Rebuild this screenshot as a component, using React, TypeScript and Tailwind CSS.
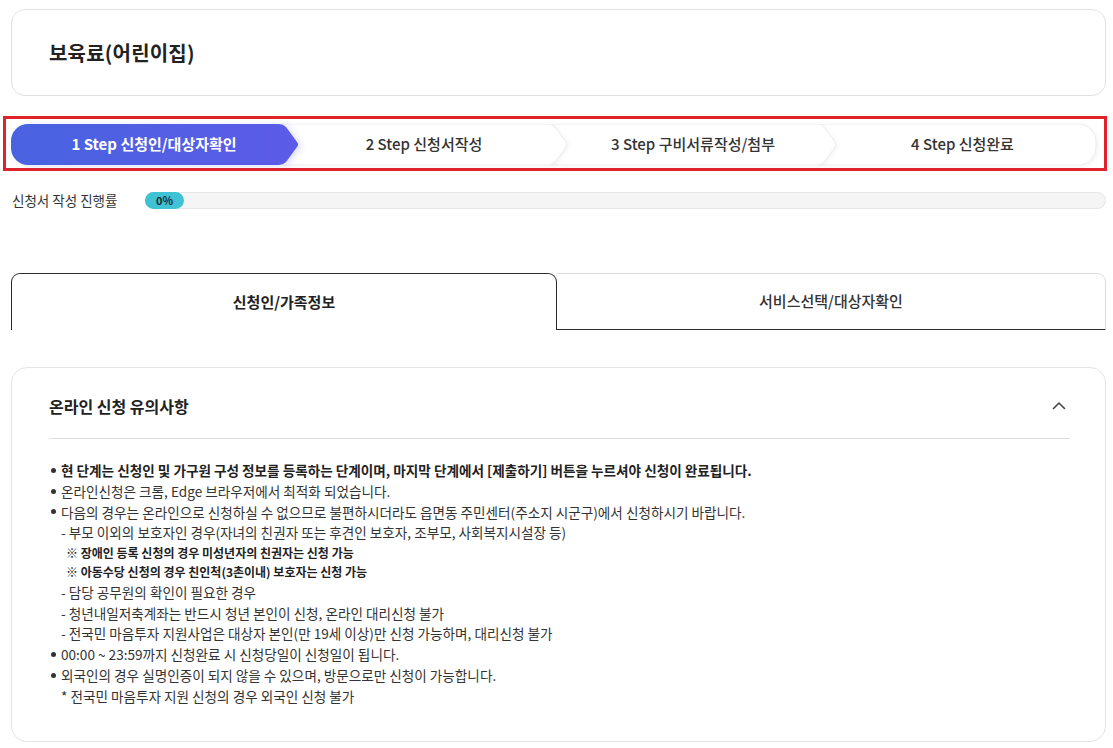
import React from 'react';

const steps = [
  { no: 1, label: '신청인/대상자확인' },
  { no: 2, label: '신청서작성' },
  { no: 3, label: '구비서류작성/첨부' },
  { no: 4, label: '신청완료' },
];

const StepShape = ({ index, width }: { index: number; width: number }) => {
  const h = 41;
  const w = width;
  if (index === 0) {
    return (
      <svg width={w} height={h} className="absolute inset-0 drop-shadow-[3px_1px_3px_rgba(60,70,200,0.18)]">
        <defs>
          <linearGradient id="stepActive" x1="0" x2="1" y1="0" y2="0">
            <stop offset="0%" stopColor="#4863e0" />
            <stop offset="100%" stopColor="#5c5be8" />
          </linearGradient>
        </defs>
        <path
          d={`M17,0 H${w - 20} Q${w - 16},0 ${w - 13},3 L${w - 2},18 Q${w},20.5 ${w - 2},23 L${w - 13},38 Q${w - 16},${h} ${w - 20},${h} H17 A17,17 0 0 1 0,24 V17 A17,17 0 0 1 17,0 Z`}
          fill="url(#stepActive)"
        />
      </svg>
    );
  }
  const last = index === 3;
  const d = last
    ? `M2,0 H${w - 18} A18,18 0 0 1 ${w - 1},18 V23 A18,18 0 0 1 ${w - 18},${h} H2 L14,20.5 Z`
    : `M2,0 H${w - 20} Q${w - 16},0 ${w - 13},3 L${w - 2},18 Q${w},20.5 ${w - 2},23 L${w - 13},38 Q${w - 16},${h} ${w - 20},${h} H2 L14,20.5 Z`;
  return (
    <svg width={w} height={h} className="absolute inset-0 drop-shadow-[1px_1px_2px_rgba(0,0,0,0.06)]">
      <path d={d} fill="#ffffff" stroke="#ececec" strokeWidth="1" />
    </svg>
  );
};

const noticeItems: { kind: 'bullet' | 'dash' | 'note' | 'star'; text: string; bold?: boolean }[] = [
  { kind: 'bullet', bold: true, text: '현 단계는 신청인 및 가구원 구성 정보를 등록하는 단계이며, 마지막 단계에서 [제출하기] 버튼을 누르셔야 신청이 완료됩니다.' },
  { kind: 'bullet', text: '온라인신청은 크롬, Edge 브라우저에서 최적화 되었습니다.' },
  { kind: 'bullet', text: '다음의 경우는 온라인으로 신청하실 수 없으므로 불편하시더라도 읍면동 주민센터(주소지 시군구)에서 신청하시기 바랍니다.' },
  { kind: 'dash', text: '- 부모 이외의 보호자인 경우(자녀의 친권자 또는 후견인 보호자, 조부모, 사회복지시설장 등)' },
  { kind: 'note', text: '※ 장애인 등록 신청의 경우 미성년자의 친권자는 신청 가능' },
  { kind: 'note', text: '※ 아동수당 신청의 경우 친인척(3촌이내) 보호자는 신청 가능' },
  { kind: 'dash', text: '- 담당 공무원의 확인이 필요한 경우' },
  { kind: 'dash', text: '- 청년내일저축계좌는 반드시 청년 본인이 신청, 온라인 대리신청 불가' },
  { kind: 'dash', text: '- 전국민 마음투자 지원사업은 대상자 본인(만 19세 이상)만 신청 가능하며, 대리신청 불가' },
  { kind: 'bullet', text: '00:00 ~ 23:59까지 신청완료 시 신청당일이 신청일이 됩니다.' },
  { kind: 'bullet', text: '외국인의 경우 실명인증이 되지 않을 수 있으며, 방문으로만 신청이 가능합니다.' },
  { kind: 'star', text: '* 전국민 마음투자 지원 신청의 경우 외국인 신청 불가' },
];

export default function App() {
  return (
    <div className="min-h-screen bg-white font-['Noto_Sans_CJK_KR','Noto_Sans',sans-serif] text-[#333]">
      <div className="pl-[11px] pr-[7px] pt-[9px] pb-[6px]">
        {/* Title */}
        <div className="flex h-[87px] items-center rounded-[14px] border border-[#e2e2e2] pl-[37px]">
          <h1 className="text-[20px] font-bold tracking-[0.2px] text-[#222]">보육료(어린이집)</h1>
        </div>

        {/* Steps */}
        <div className="-ml-[8px] -mr-[1px] mt-[20px] border-[3px] border-[#e0222c] pl-[5px] pt-[5px] pb-[3px]">
          <div className="flex">
            {steps.map((s, i) => {
              const width = i === 3 ? 279 : 288;
              return (
                <div
                  key={s.no}
                  className={`relative flex h-[41px] shrink-0 items-center justify-center ${
                    i === 0 ? 'z-40 w-[288px] pr-[2px]' : i === 1 ? 'z-30 -ml-[19px] w-[288px]' : i === 2 ? 'z-20 -ml-[19px] w-[288px]' : 'z-10 -ml-[19px] w-[279px] pl-[10px]'
                  }`}
                >
                  <StepShape index={i} width={width} />
                  <span className={`relative text-[15px] ${i === 0 ? 'font-bold text-white' : 'font-medium text-[#333]'}`}>
                    {s.no} Step {s.label}
                  </span>
                </div>
              );
            })}
          </div>
        </div>

        {/* Progress */}
        <div className="mt-[21px] flex h-[17px] items-center">
          <span className="w-[134px] pl-[1px] text-[13.5px] leading-[17px] text-[#333]">신청서 작성 진행률</span>
          <div className="relative h-[17px] flex-1 rounded-full border border-[#e6e6e6] bg-[#f5f5f5]">
            <div className="absolute -left-px -top-px flex h-[17px] w-[39px] items-center justify-center rounded-full bg-[#3ec2d4]">
              <span className="text-[11px] font-bold leading-none text-[#1d2b33]">0%</span>
            </div>
          </div>
        </div>

        {/* Tabs */}
        <div className="mt-[64px] flex h-[57px]">
          <div className="flex w-[546px] items-center justify-center rounded-t-[9px] border border-b-0 border-[#2b2b2b]">
            <span className="text-[15px] font-bold text-[#222]">신청인/가족정보</span>
          </div>
          <div className="flex flex-1 items-center justify-center rounded-tr-[9px] border-r border-t border-b border-r-[#dddddd] border-t-[#dddddd] border-b-[#2b2b2b]">
            <span className="text-[15px] font-medium text-[#333]">서비스선택/대상자확인</span>
          </div>
        </div>

        {/* Notice */}
        <div className="mt-[37px] rounded-[16px] border border-[#e4e4e4] pl-[37px] pr-[35px] pt-[26px] pb-[35px]">
          <div className="flex h-[24px] items-center justify-between">
            <h2 className="text-[16px] font-bold text-[#222]">온라인 신청 유의사항</h2>
            <svg width="18" height="18" viewBox="0 0 18 18" className="mr-[2px]" fill="none">
              <path d="M3.5 11.5 L9 6 L14.5 11.5" stroke="#444" strokeWidth="1.6" strokeLinecap="round" strokeLinejoin="round" />
            </svg>
          </div>
          <div className="mt-[20px] border-t border-[#dedede]" />
          <ul className="mt-[21px] text-[13.6px] text-[#333]">
            {noticeItems.map((item, idx) => {
              if (item.kind === 'bullet') {
                return (
                  <li key={idx} className={`flex h-[20.7px] items-center ${item.bold ? 'font-bold text-[#222]' : ''}`}>
                    <span className="ml-[2px] mr-[5px] inline-block h-[5px] w-[5px] rounded-full bg-[#333]" />
                    <span>{item.text}</span>
                  </li>
                );
              }
              if (item.kind === 'note') {
                return (
                  <li key={idx} className="flex h-[19.6px] items-center pl-[17px] text-[12px] font-bold text-[#222]">
                    {item.text}
                  </li>
                );
              }
              return (
                <li key={idx} className="flex h-[20.7px] items-center pl-[12px]">
                  {item.text}
                </li>
              );
            })}
          </ul>
        </div>
      </div>
    </div>
  );
}
